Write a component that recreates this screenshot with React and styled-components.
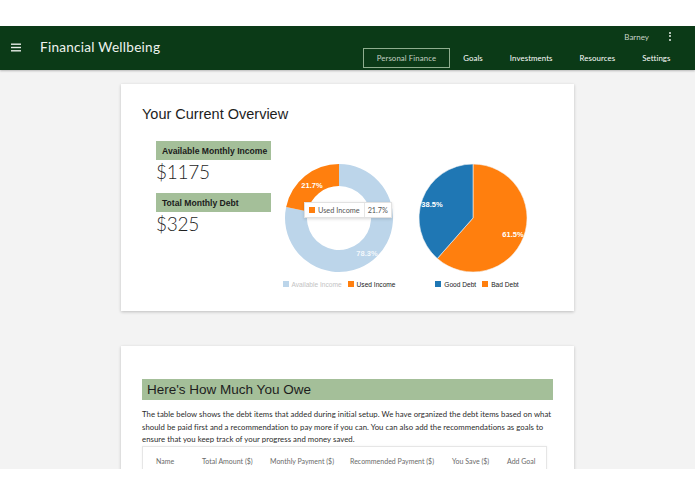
import React from 'react';
import styled, { createGlobalStyle } from 'styled-components';

const GlobalStyle = createGlobalStyle`
  html, body {
    margin: 0;
    padding: 0;
    background: #ffffff;
  }
  body {
    font-family: Lato, "Open Sans", sans-serif;
    color: #333;
  }
`;

const TopStrip = styled.div`
  height: 26px;
  background: #ffffff;
`;

const Frame = styled.div`
  height: 443px;
  overflow: hidden;
  background: #f3f3f3;
`;

const Header = styled.header`
  height: 44px;
  background: #0b3a17;
  display: flex;
  align-items: stretch;
  justify-content: space-between;
  box-shadow: 0 1px 2px rgba(0, 0, 0, 0.25);
  position: relative;
`;

const Brand = styled.div`
  display: flex;
  align-items: center;
  padding-left: 11px;
  padding-bottom: 2px;
`;

const MenuButton = styled.div`
  width: 11px;
  display: flex;
  color: #e6ece6;
  margin-right: 18px;
`;

const Title = styled.h1`
  margin: 0;
  font-family: Lato, sans-serif;
  font-weight: 400;
  font-size: 13.6px;
  color: #eef2ee;
  letter-spacing: 0.25px;
`;

const RightSide = styled.div`
  display: flex;
  flex-direction: column;
  align-items: flex-end;
`;

const UserRow = styled.div`
  display: flex;
  align-items: center;
  height: 22px;
  padding-right: 24px;
  font-size: 8px;
  color: #c9d3c9;
`;

const Kebab = styled.span`
  display: flex;
  flex-direction: column;
  gap: 1.5px;
  margin-left: 20px;
  margin-top: -2px;

  i {
    width: 2px;
    height: 2px;
    border-radius: 50%;
    background: #e6ece6;
  }
`;

const Nav = styled.nav`
  display: flex;
  align-items: center;
  height: 20px;
  padding-right: 11px;
`;

const Tab = styled.a`
  height: 18px;
  display: flex;
  align-items: center;
  padding: 0 12.5px;
  font-size: 7.8px;
  letter-spacing: 0.1px;
  color: ${p => (p.$active ? '#c2cfc2' : '#ffffff')};
  border: 1px solid ${p => (p.$active ? '#8fae8f' : 'transparent')};
  text-decoration: none;
`;

const Main = styled.main`
  display: flex;
  flex-direction: column;
  align-items: center;
  padding-top: 14px;
  gap: 35px;
`;

const Card = styled.section`
  width: 453px;
  box-sizing: border-box;
  background: #ffffff;
  box-shadow: 0 1px 3px rgba(0, 0, 0, 0.22);
  padding: ${p => p.$pad};
  min-height: ${p => p.$minHeight || 'auto'};
`;

const CardTitle = styled.h2`
  margin: 0;
  font-family: "Liberation Sans", Arial, sans-serif;
  font-weight: 400;
  font-size: 14.5px;
  line-height: 18px;
  color: #1d1d1d;
`;

const OverviewRow = styled.div`
  display: flex;
  align-items: flex-start;
  margin-top: 18px;
  padding-left: 14px;
`;

const Figures = styled.div`
  width: 115px;
  display: flex;
  flex-direction: column;
`;

const FigureLabel = styled.div`
  height: 19px;
  display: flex;
  align-items: center;
  padding-left: 6px;
  margin-top: ${p => p.$gap || '0px'};
  background: #a4bf99;
  font-family: "Liberation Sans", Arial, sans-serif;
  font-weight: 700;
  font-size: 8.6px;
  color: #1b1b1b;
`;

const FigureValue = styled.div`
  font-family: Lato, sans-serif;
  font-weight: 300;
  font-size: 19px;
  line-height: 24px;
  color: #1f1f1f;
  letter-spacing: -0.3px;
`;

const ChartBlock = styled.div`
  position: relative;
  width: 120px;
  margin-top: 17px;
  margin-left: ${p => p.$offset};
  display: flex;
  flex-direction: column;
  align-items: center;
`;

const ChartSvg = styled.svg`
  display: block;
  width: 120px;
  height: 120px;
`;

const SliceLabel = styled.text`
  font-family: "Liberation Sans", Arial, sans-serif;
  font-size: 7.5px;
  font-weight: 700;
  fill: ${p => p.$muted ? 'rgba(255,255,255,0.85)' : '#ffffff'};
`;

const Legend = styled.div`
  display: flex;
  align-items: center;
  gap: 6px;
  margin-top: 1px;
  height: 10px;
  font-family: "Liberation Sans", Arial, sans-serif;
  font-size: 6.6px;
  white-space: nowrap;
  margin-left: ${p => p.$shift || '0px'};
`;

const LegendItem = styled.span`
  display: flex;
  align-items: center;
  gap: 3px;
  color: ${p => (p.$off ? '#c3c3c3' : '#222')};

  &::before {
    content: '';
    width: 6px;
    height: 6px;
    background: ${p => p.$color};
  }
`;

const Tooltip = styled.div`
  position: absolute;
  left: 25px;
  top: 44px;
  height: 14px;
  display: flex;
  align-items: center;
  background: #ffffff;
  border: 1px solid #e2e2e2;
  box-shadow: 0 1px 3px rgba(0, 0, 0, 0.15);
  font-size: 7.3px;
  color: #555;
  white-space: nowrap;
`;

const TipKey = styled.span`
  display: flex;
  align-items: center;
  gap: 3px;
  padding: 0 4px 0 4px;
  height: 100%;
  border-right: 1px solid #e6e6e6;

  &::before {
    content: '';
    width: 6px;
    height: 6px;
    background: #ff7f0e;
  }
`;

const TipValue = styled.span`
  padding: 0 3px;
`;

const SectionBar = styled.h2`
  margin: 0;
  height: 21px;
  display: flex;
  align-items: center;
  padding-left: 5px;
  background: #a4bf99;
  font-family: "Liberation Sans", Arial, sans-serif;
  font-weight: 400;
  font-size: 13.5px;
  color: #1d1d1d;
`;

const Intro = styled.p`
  margin: 8px -4px 0 0;
  font-size: 7.75px;
  line-height: 12.6px;
  letter-spacing: 0.05px;
  color: #2b2b2b;
`;

const Table = styled.div`
  margin-right: 6px;
  border: 1px solid #e6e6e6;
  box-shadow: 0 0 2px rgba(0, 0, 0, 0.06);
  height: 60px;
`;

const HeadRow = styled.div`
  display: grid;
  grid-template-columns: 46px 68px 80px 102px 55px auto;
  padding: 10px 0 0 13px;
  font-size: 7px;
  color: #6a6a6a;
  white-space: nowrap;
`;

const Donut = () => (
  <ChartSvg viewBox="0 0 120 120">
    <path
      d="M60,6 A54,54 0 1 1 7.16,48.88 L28.69,53.41 A32,32 0 1 0 60,28 Z"
      fill="#bcd5ea"
    />
    <path
      d="M60,6 A54,54 0 0 0 7.16,48.88 L28.69,53.41 A32,32 0 0 1 60,28 Z"
      fill="#ff7f0e"
    />
    <SliceLabel x="33" y="30" textAnchor="middle">21.7%</SliceLabel>
    <SliceLabel x="88" y="98" textAnchor="middle" $muted>78.3%</SliceLabel>
  </ChartSvg>
);

const Pie = () => (
  <ChartSvg viewBox="0 0 120 120">
    <path d="M60,60 L60,6 A54,54 0 1 1 24.29,100.5 Z" fill="#ff7f0e" stroke="#f4f4f4" strokeWidth="0.6" />
    <path d="M60,60 L60,6 A54,54 0 0 0 24.29,100.5 Z" fill="#1f77b4" stroke="#f4f4f4" strokeWidth="0.6" />
    <SliceLabel x="19" y="49" textAnchor="middle">38.5%</SliceLabel>
    <SliceLabel x="100" y="79" textAnchor="middle">61.5%</SliceLabel>
  </ChartSvg>
);

const tabs = ['Personal Finance', 'Goals', 'Investments', 'Resources', 'Settings'];
const columns = ['Name', 'Total Amount ($)', 'Monthly Payment ($)', 'Recommended Payment ($)', 'You Save ($)', 'Add Goal'];

const App = () => {
  return (
    <>
      <GlobalStyle />
      <TopStrip />
      <Frame>
        <Header>
          <Brand>
            <MenuButton>
              <svg width="11" height="9" viewBox="0 0 11 9">
                <rect x="0" y="0.5" width="10" height="1.4" fill="currentColor" />
                <rect x="0" y="3.8" width="10" height="1.4" fill="currentColor" />
                <rect x="0" y="7.1" width="10" height="1.4" fill="currentColor" />
              </svg>
            </MenuButton>
            <Title>Financial Wellbeing</Title>
          </Brand>
          <RightSide>
            <UserRow>
              Barney
              <Kebab><i /><i /><i /></Kebab>
            </UserRow>
            <Nav>
              {tabs.map((t, i) => (
                <Tab key={t} href="#" $active={i === 0}>{t}</Tab>
              ))}
            </Nav>
          </RightSide>
        </Header>

        <Main>
          <Card $pad="21px 21px 0 21px" $minHeight="227px">
            <CardTitle>Your Current Overview</CardTitle>
            <OverviewRow>
              <Figures>
                <FigureLabel>Available Monthly Income</FigureLabel>
                <FigureValue>$1175</FigureValue>
                <FigureLabel $gap="9px">Total Monthly Debt</FigureLabel>
                <FigureValue>$325</FigureValue>
              </Figures>

              <ChartBlock $offset="8px">
                <Donut />
                <Legend>
                  <LegendItem $color="#bcd5ea" $off>Available Income</LegendItem>
                  <LegendItem $color="#ff7f0e">Used Income</LegendItem>
                </Legend>
                <Tooltip>
                  <TipKey>Used Income</TipKey>
                  <TipValue>21.7%</TipValue>
                </Tooltip>
              </ChartBlock>

              <ChartBlock $offset="14px">
                <Pie />
                <Legend $shift="8px">
                  <LegendItem $color="#1f77b4">Good Debt</LegendItem>
                  <LegendItem $color="#ff7f0e">Bad Debt</LegendItem>
                </Legend>
              </ChartBlock>
            </OverviewRow>
          </Card>

          <Card $pad="33px 21px 0 21px" $minHeight="200px">
            <SectionBar>Here's How Much You Owe</SectionBar>
            <Intro>
              The table below shows the debt items that added during initial setup. We have organized the debt
              items based on what should be paid first and a recommendation to pay more if you can. You can also
              add the recommendations as goals to ensure that you keep track of your progress and money saved.
            </Intro>
            <Table>
              <HeadRow>
                {columns.map(c => <span key={c}>{c}</span>)}
              </HeadRow>
            </Table>
          </Card>
        </Main>
      </Frame>
    </>
  );
};

export default App;
